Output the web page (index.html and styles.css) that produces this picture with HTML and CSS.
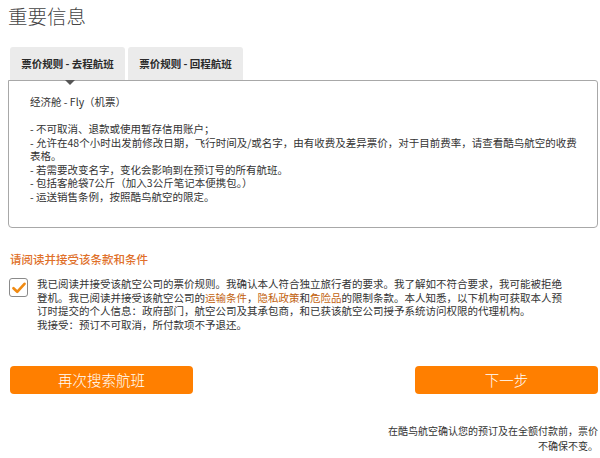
FILE: index.html
```html
<!DOCTYPE html>
<html lang="zh-CN">
<head>
<meta charset="utf-8">
<link rel="stylesheet" href="styles.css">
</head>
<body>
<div class="page">
  <h1 class="title">重要信息</h1>
  <div class="tabs">
    <div class="tab active">票价规则 - 去程航班</div>
    <div class="tab">票价规则 - 回程航班</div>
  </div>
  <div class="box">
    <p class="fare">经济舱 - Fly（机票）</p>
    <ul class="rules">
      <li>- 不可取消、退款或使用暂存信用账户；</li>
      <li>- 允许在48个小时出发前修改日期，飞行时间及/或名字，由有收费及差异票价，对于目前费率，请查看酷鸟航空的收费表格。</li>
      <li>- 若需要改变名字，变化会影响到在预订号的所有航班。</li>
      <li>- 包括客舱袋7公斤（加入3公斤笔记本便携包。）</li>
      <li>- 运送销售条例，按照酷鸟航空的限定。</li>
    </ul>
  </div>
  <h2 class="terms-title">请阅读并接受该条款和条件</h2>
  <div class="terms">
    <span class="check">
      <svg width="14" height="12" viewBox="0 0 14 12"><path d="M1.5 6.2 L5.2 9.8 L12.5 1.8" fill="none" stroke="#f08a12" stroke-width="2.6" stroke-linecap="round" stroke-linejoin="round"/></svg>
    </span>
    <div class="terms-text">
      <span class="line">我已阅读并接受该航空公司的票价规则。我确认本人符合独立旅行者的要求。我了解如不符合要求，我可能被拒绝</span>
      <span class="line">登机。我已阅读并接受该航空公司的<a class="lnk">运输条件</a>，<a class="lnk">隐私政策</a>和<a class="lnk">危险品</a>的限制条款。本人知悉，以下机构可获取本人预</span>
      <span class="line">订时提交的个人信息：政府部门，航空公司及其承包商，和已获该航空公司授予系统访问权限的代理机构。</span>
      <span class="line">我接受：预订不可取消，所付款项不予退还。</span>
    </div>
  </div>
  <div class="actions">
    <button class="btn">再次搜索航班</button>
    <button class="btn">下一步</button>
  </div>
  <p class="note"><span class="line">在酷鸟航空确认您的预订及在全额付款前，票价</span><span class="line">不确保不变。</span></p>
</div>
</body>
</html>
```

FILE: styles.css
```css
* { box-sizing: border-box; }
html, body { margin: 0; padding: 0; background: #fff; }
body {
  font-family: "Noto Sans CJK SC", "Liberation Sans", sans-serif;
  color: #333;
  width: 600px;
  height: 458px;
  overflow: hidden;
}
.page {
  padding: 0 2px 0 8px;
  display: flex;
  flex-direction: column;
}
.title {
  margin: 3px 0 0 0;
  font-size: 19.5px;
  line-height: 26px;
  font-weight: 300;
  color: #444;
}
.tabs {
  display: flex;
  gap: 3px;
  margin: 18px 0 0 2px;
}
.tab {
  width: 115px;
  height: 33px;
  background: #ebebeb;
  border-radius: 3px 3px 0 0;
  font-size: 10.5px;
  font-weight: bold;
  line-height: 33px;
  text-align: center;
  color: #2a2a2a;
  position: relative;
}
.tab.active::after {
  content: "";
  position: absolute;
  left: 55px;
  bottom: -5px;
  border-left: 5px solid transparent;
  border-right: 5px solid transparent;
  border-top: 5px solid #555;
  z-index: 2;
}
.box {
  border: 1px solid #a8a8a8;
  border-radius: 0 3px 4px 4px;
  height: 148px;
  padding: 14px 20px 0 21px;
  font-size: 10.5px;
  line-height: 13.5px;
}
.fare { margin: 0 0 13.5px 0; }
.rules { list-style: none; margin: 0; padding: 0; }
.terms-title {
  margin: 24px 0 0 2px;
  font-size: 11.5px;
  line-height: 14px;
  font-weight: 500;
  color: #e0702a;
}
.terms {
  display: flex;
  gap: 9px;
  margin-top: 11px;
  align-items: flex-start;
}
.check {
  width: 19px;
  height: 19px;
  border: 1px solid #8a8a8a;
  border-radius: 3px;
  background: #fff;
  display: flex;
  align-items: center;
  justify-content: center;
  margin: 1px 0 0 1px;
  flex: none;
}
.terms-text {
  margin: 0;
  font-size: 10.5px;
  line-height: 13.5px;
}
.line {
  display: block;
  white-space: nowrap;
}
.lnk { color: #c2620e; }
.actions {
  display: flex;
  justify-content: space-between;
  margin: 35px 0 0 2px;
}
.btn {
  width: 183px;
  height: 28px;
  border: none;
  border-radius: 4px;
  background: #ff7f00;
  color: #fff;
  font-family: "Noto Sans CJK SC", sans-serif;
  font-size: 14.5px;
  font-weight: 300;
  line-height: 28px;
  padding: 0;
}
.note {
  margin: 30px 0 0 0;
  text-align: right;
  font-size: 10px;
  line-height: 14.5px;
  color: #333;
}
```
